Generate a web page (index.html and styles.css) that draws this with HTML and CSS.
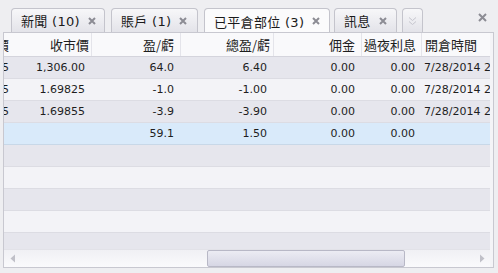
FILE: index.html
```html
<!DOCTYPE html>
<html>
<head>
<meta charset="utf-8">
<link rel="stylesheet" href="styles.css">
</head>
<body>
<div class="window">
  <div class="tabbar">
    <div class="tab t1"><span class="label">新聞 (10)</span><svg class="x" width="8" height="8" viewBox="0 0 8 8"><path d="M1 1L7 7M7 1L1 7"/></svg></div>
    <div class="tab t2"><span class="label">賬戶 (1)</span><svg class="x" width="8" height="8" viewBox="0 0 8 8"><path d="M1 1L7 7M7 1L1 7"/></svg></div>
    <div class="tab t3 active"><span class="label">已平倉部位 (3)</span><svg class="x" width="8" height="8" viewBox="0 0 8 8"><path d="M1 1L7 7M7 1L1 7"/></svg></div>
    <div class="tab t4"><span class="label">訊息</span><svg class="x" width="8" height="8" viewBox="0 0 8 8"><path d="M1 1L7 7M7 1L1 7"/></svg></div>
    <div class="tab more"><svg width="9" height="10" viewBox="0 0 9 10"><path d="M1 1.5L4.5 4.5L8 1.5M1 5.5L4.5 8.5L8 5.5"/></svg></div>
    <div class="spacer"></div>
    <svg class="close" width="9" height="9" viewBox="0 0 9 9"><path d="M1 1L8 8M8 1L1 8"/></svg>
  </div>
  <div class="panel">
    <div class="grid">
      <div class="row head">
        <div class="frag"><span>價</span></div>
        <div class="c c1 h">收市價</div>
        <div class="c c2 h">盈/虧</div>
        <div class="c c3 h">總盈/虧</div>
        <div class="c c4 h">佣金</div>
        <div class="c c5 h">過夜利息</div>
        <div class="c c6 h left">開倉時間</div>
      </div>
      <div class="row odd">
        <div class="frag"><span>5</span></div>
        <div class="c c1">1,306.00</div>
        <div class="c c2">64.0</div>
        <div class="c c3">6.40</div>
        <div class="c c4">0.00</div>
        <div class="c c5">0.00</div>
        <div class="c c6 left">7/28/2014 2:15</div>
      </div>
      <div class="row even">
        <div class="frag"><span>5</span></div>
        <div class="c c1">1.69825</div>
        <div class="c c2">-1.0</div>
        <div class="c c3">-1.00</div>
        <div class="c c4">0.00</div>
        <div class="c c5">0.00</div>
        <div class="c c6 left">7/28/2014 2:15</div>
      </div>
      <div class="row odd">
        <div class="frag"><span>5</span></div>
        <div class="c c1">1.69855</div>
        <div class="c c2">-3.9</div>
        <div class="c c3">-3.90</div>
        <div class="c c4">0.00</div>
        <div class="c c5">0.00</div>
        <div class="c c6 left">7/28/2014 2:15</div>
      </div>
      <div class="row total">
        <div class="frag"></div>
        <div class="c c1"></div>
        <div class="c c2">59.1</div>
        <div class="c c3">1.50</div>
        <div class="c c4">0.00</div>
        <div class="c c5">0.00</div>
        <div class="c c6"></div>
      </div>
      <div class="row odd empty"></div>
      <div class="row even empty"></div>
      <div class="row odd empty"></div>
      <div class="row even empty"></div>
      <div class="row odd empty last"></div>
    </div>
    <div class="hscroll">
      <div class="arrow">
        <svg width="8" height="9" viewBox="0 0 8 9"><path d="M6 0.5L1.5 4.5L6 8.5Z"/></svg>
      </div>
      <div class="track pre"></div>
      <div class="thumb"></div>
      <div class="track post"></div>
      <div class="arrow">
        <svg width="8" height="9" viewBox="0 0 8 9"><path d="M2 0.5L6.5 4.5L2 8.5Z"/></svg>
      </div>
    </div>
  </div>
</div>
</body>
</html>
```
FILE: styles.css
```css
html, body {
  margin: 0;
  padding: 0;
}
body {
  width: 498px;
  height: 273px;
  overflow: hidden;
  background: #ebebef;
  font-family: "DejaVu Sans", "Noto Sans CJK TC", sans-serif;
  color: #1e1e1e;
}
.window {
  width: 498px;
  height: 273px;
  display: flex;
  flex-direction: column;
  background: #eeeef1;
}
.tabbar {
  height: 32px;
  box-sizing: border-box;
  padding: 8px 0 0 11px;
  display: flex;
  align-items: flex-end;
  gap: 6px;
}
.tab {
  height: 24px;
  box-sizing: border-box;
  border: 1px solid #c4c4cc;
  border-bottom: none;
  border-radius: 4px 4px 0 0;
  background: linear-gradient(#f7f7f9, #e3e3e9);
  display: flex;
  align-items: center;
  padding: 0 7px 0 9px;
  font-size: 13px;
  color: #1a1a1a;
}
.tab .label {
  font-family: "DejaVu Sans", "Noto Sans CJK TC", sans-serif;
  letter-spacing: 0.3px;
}
.tab .x {
  margin-left: 8px;
  stroke: #8c8c94;
  stroke-width: 2;
  fill: none;
}
.t1 { width: 94px; }
.t2 { width: 87px; }
.t3 { width: 126px; }
.t4 { width: 63px; margin-left: -2px; }
.tab.active {
  background: #fbfbfc;
  height: 25px;
  margin-bottom: -1px;
}
.tab.more {
  width: 21px;
  padding: 0;
  margin-left: -1px;
  justify-content: center;
}
.tab.more svg {
  stroke: #c6c6ce;
  stroke-width: 1;
  fill: none;
}
.spacer { flex: 1; }
.close {
  align-self: flex-start;
  margin: 5px 11px 0 0;
  stroke: #8c8c94;
  stroke-width: 2;
  fill: none;
}
.panel {
  margin: 0 4px 5px 3px;
  border: 1px solid #c8c8d0;
  flex: 1;
  display: flex;
  flex-direction: column;
  background: #f4f4f7;
  overflow: hidden;
  padding-right: 3px;
}
.grid {
  flex: 1;
  display: flex;
  flex-direction: column;
  overflow: hidden;
}
.row {
  display: grid;
  grid-template-columns: 6px 81px 89px 93px 88px 60px 1fr;
  height: 22px;
  flex: none;
  box-sizing: border-box;
  border-bottom: 1px solid #dcdce3;
  font-size: 11px;
  align-items: center;
}
.row.head {
  height: 24px;
  background: #f9f9fb;
  border-bottom: 1px solid #d4d4dc;
  font-size: 13px;
}
.row.odd { background: #e6e6ed; }
.row.even { background: #f3f3f7; }
.row.total { background: #d9eafa; border-bottom-color: #c8d8e8; }
.row.last { flex: 1; border-bottom: none; }
.frag {
  height: 100%;
  display: flex;
  align-items: center;
  justify-content: flex-end;
  overflow: hidden;
  padding-right: 1px;
  box-sizing: border-box;
  white-space: nowrap;
}
.c {
  padding-right: 6px;
  white-space: nowrap;
  overflow: hidden;
  height: 100%;
  display: flex;
  align-items: center;
  justify-content: flex-end;
  box-sizing: border-box;
}
.c.left {
  justify-content: flex-start;
  padding: 0 0 0 3px;
}
.head .c {
  border-left: 1px solid #e4e4ea;
  font-family: "Noto Sans CJK TC", sans-serif;
}
.head .c1 { border-left: none; padding-right: 2px; }
.head .c3 { padding-right: 3px; }
.head .c5 { padding-right: 5px; }
.hscroll {
  height: 17px;
  flex: none;
  display: flex;
  align-items: stretch;
  background: linear-gradient(#f0f0f4, #fafafc);
  border-top: 1px solid #e2e2e8;
}
.arrow {
  width: 17px;
  display: flex;
  align-items: center;
  justify-content: center;
  fill: #c0c0c8;
}
.track.pre { width: 186px; }
.thumb {
  width: 198px;
  box-sizing: border-box;
  border: 1px solid #b8b8c6;
  border-radius: 2px;
  background: linear-gradient(#ececf3, #d6d6e4);
}
.track.post { flex: 1; }
```
